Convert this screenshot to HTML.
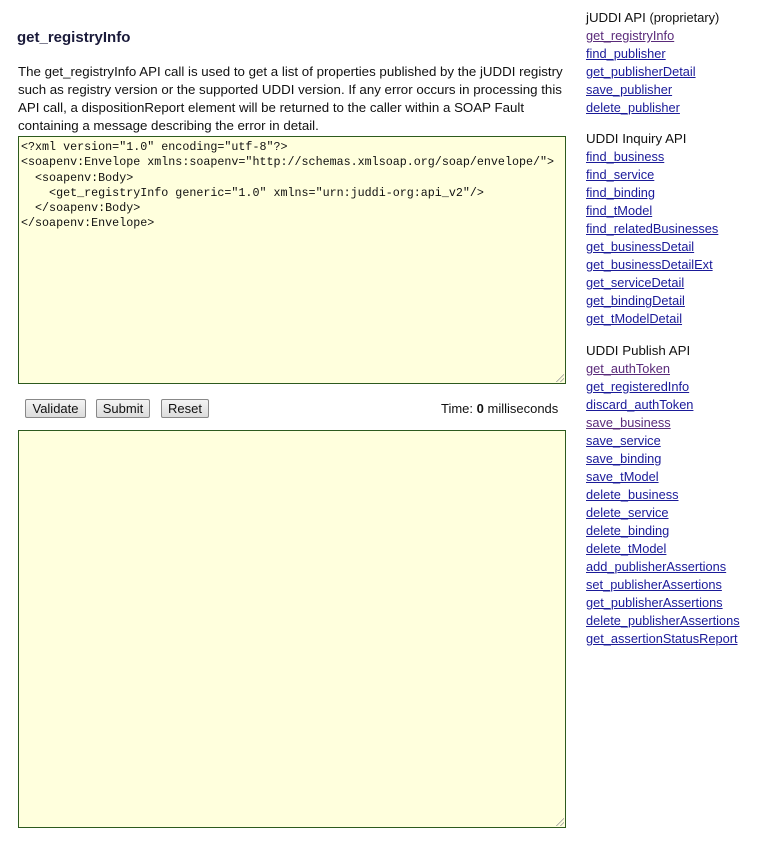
<!DOCTYPE html>
<html><head><meta charset="utf-8">
<style>
body{margin:0;background:#fff;font-family:"Liberation Sans",sans-serif;color:#111;}
.h{position:absolute;left:17px;top:29px;font-size:15px;font-weight:bold;color:#1a1a3a;}
.p{position:absolute;left:18px;top:63px;font-size:13.3px;line-height:18px;white-space:nowrap;color:#111;}
.ta{position:absolute;left:18px;width:546px;background:#ffffdd;border:1px solid #2d5a1e;box-sizing:content-box;}
.code{font-family:"Liberation Mono",monospace;font-size:11.7px;line-height:15.3px;white-space:pre;padding:3px 0 0 2px;color:#111;}
.btn{position:absolute;top:399px;height:19px;font-size:13px;line-height:17px;border:1px solid #888;border-radius:2px;background:linear-gradient(#f4f4f4,#dcdcdc);box-sizing:border-box;text-align:center;color:#111;}
.time{position:absolute;left:441px;top:401px;font-size:13px;}
.side{position:absolute;left:586px;font-size:12.8px;line-height:18px;}
.side b{font-weight:normal;font-size:13.3px;color:#111;display:block}
.side a{display:block;color:#1a1a99;text-decoration:underline;}
.side a.v{color:#5a2a7a;}
.grip{position:absolute;right:1px;bottom:1px;width:8px;height:8px;background:linear-gradient(135deg,transparent 50%,#999 50%,transparent 60%,transparent 75%,#999 75%,transparent 85%);}
</style></head><body>
<div class="h">get_registryInfo</div>
<div class="p">The get_registryInfo API call is used to get a list of properties published by the jUDDI registry<br>such as registry version or the supported UDDI version. If any error occurs in processing this<br>API call, a dispositionReport element will be returned to the caller within a SOAP Fault<br>containing a message describing the error in detail.</div>
<div class="ta" style="top:136px;height:246px"><div class="code">&lt;?xml version="1.0" encoding="utf-8"?&gt;
&lt;soapenv:Envelope xmlns:soapenv="http://schemas.xmlsoap.org/soap/envelope/"&gt;
  &lt;soapenv:Body&gt;
    &lt;get_registryInfo generic="1.0" xmlns="urn:juddi-org:api_v2"/&gt;
  &lt;/soapenv:Body&gt;
&lt;/soapenv:Envelope&gt;</div><div class="grip"></div></div>
<div class="btn" style="left:25px;width:61px">Validate</div>
<div class="btn" style="left:96px;width:54px">Submit</div>
<div class="btn" style="left:161px;width:48px">Reset</div>
<div class="time">Time: <b>0</b> milliseconds</div>
<div class="ta" style="top:430px;height:396px"><div class="grip"></div></div>

<div class="side" style="top:9px"><b>jUDDI API <span style="font-size:12.8px">(proprietary)</span></b>
<a class="v">get_registryInfo</a><a>find_publisher</a><a>get_publisherDetail</a><a>save_publisher</a><a>delete_publisher</a></div>
<div class="side" style="top:130px"><b>UDDI Inquiry API</b>
<a>find_business</a><a>find_service</a><a>find_binding</a><a>find_tModel</a><a>find_relatedBusinesses</a><a>get_businessDetail</a><a>get_businessDetailExt</a><a>get_serviceDetail</a><a>get_bindingDetail</a><a>get_tModelDetail</a></div>
<div class="side" style="top:342px"><b>UDDI Publish API</b>
<a class="v">get_authToken</a><a>get_registeredInfo</a><a>discard_authToken</a><a class="v">save_business</a><a>save_service</a><a>save_binding</a><a>save_tModel</a><a>delete_business</a><a>delete_service</a><a>delete_binding</a><a>delete_tModel</a><a>add_publisherAssertions</a><a>set_publisherAssertions</a><a>get_publisherAssertions</a><a>delete_publisherAssertions</a><a>get_assertionStatusReport</a></div>
</body></html>
